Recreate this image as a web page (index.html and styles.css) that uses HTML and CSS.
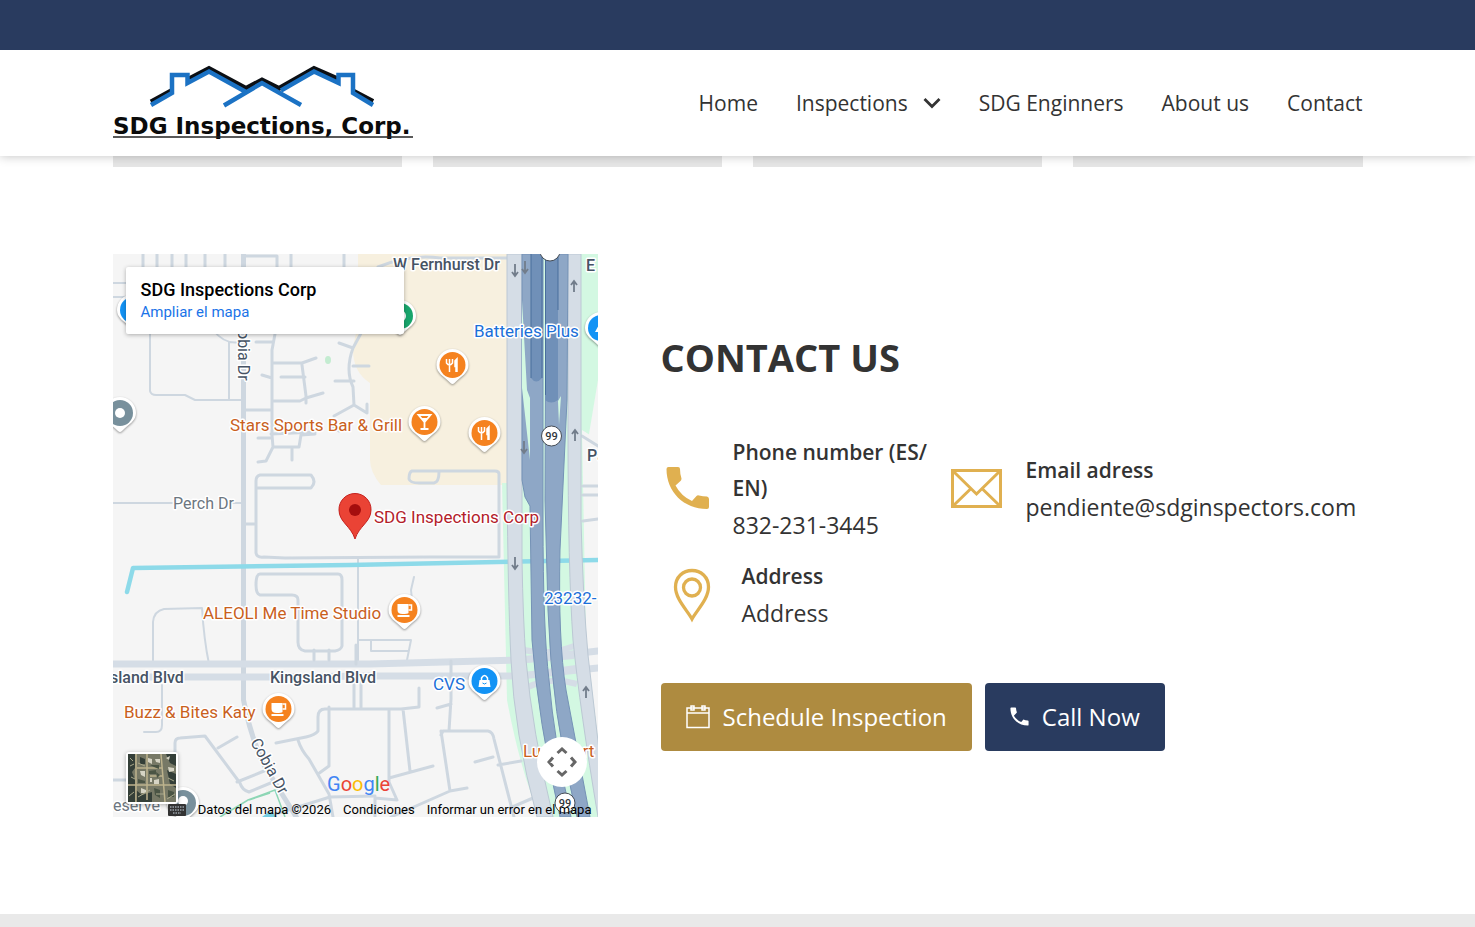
FILE: index.html
```html
<!DOCTYPE html>
<html lang="en">
<head>
<meta charset="utf-8">
<meta name="viewport" content="width=device-width, initial-scale=1">
<title>SDG Inspections, Corp.</title>
<link rel="stylesheet" href="styles.css">
</head>
<body>
<div class="topbar"></div>
<header class="header">
  <div class="container header-inner">
    <a class="logo" href="#" aria-label="SDG Inspections, Corp.">
      <svg class="logo-svg" viewBox="0 0 302 76" width="302" height="76">
        <path d="M38 37 59 25.500M76 14 96 3.500 133 23.500 149 15 166 23.500 201 3.500 225 14M240 26 260 36.500" fill="none" stroke="#0b0f14" stroke-width="5"/>
        <g fill="none" stroke="#1b72c4" stroke-width="4.500">
          <path d="M38 40 59 28V10H74.500V18L96 6.500 133 27M168 25.500 201 6.500 225.500 18V10H240V28L260 40M111 40.500 149 18 188 40"/>
        </g>
        <text class="logo-text" x="0" y="69">SDG Inspections, Corp.</text>
        <path d="M0 72H300" stroke="#222" stroke-width="1.500"/>
      </svg>
    </a>
    <nav class="nav">
      <a href="#">Home</a>
      <a href="#" class="nav-drop">Inspections
        <svg width="18" height="12" viewBox="0 0 18 12"><path d="M1.500 2 9 9.500 16.500 2" fill="none" stroke="#333" stroke-width="2.800"/></svg>
      </a>
      <a href="#">SDG Enginners</a>
      <a href="#">About us</a>
      <a href="#">Contact</a>
    </nav>
  </div>
</header>
<main>
  <div class="container cards"><div></div><div></div><div></div><div></div></div>
  <section class="container contact">
    <div class="map">
      <svg class="map-canvas" viewBox="113 254 485 563" preserveAspectRatio="xMidYMid slice">
        <rect x="113" y="254" width="485" height="563" fill="#f5f5f5"/>
        <path d="M358 254H507V485H381Q370 472 370 460V383Q353 372 353 350Q356 320 372 306L358 290Z" fill="#f7f0df"/>
        <ellipse cx="328" cy="360" rx="3" ry="4" fill="#c4ecd1"/>
        <path d="M502 483 507 700Q520 770 540 817H598V740L586 640 582 430 598 440V254H520V483Z" fill="#d3f8e2"/>
        <path d="M598 380 588 440V600L590 670 598 720Z" fill="#f5f5f5"/>
        <g class="roads">
          <path class="w5" d="M243.500 254V667 700Q250 735 264 765L300 823"/>
          <path class="w3" d="M143 254V267M157 254V267M172 254V267M186 254V267M205 254V267M225 254V267M245 256H277V267M291 254V267M344 254V267M378 267Q410 254 440 258H507"/>
          <path class="w2" d="M113 283H126M113 297H126M150 334V391Q151 395 156 395H185L195 400H241M213 330Q225 345 240 342M229 342V399M113 503H172M231 503H241M162 685V725Q162 732 156 732H144"/>
          <path class="w3" d="M275 334 272 350V426M256 342H272M273 363H302L316 358M302 365 306 396V403M306 398 323 393M273 401H300L306 398M281 377H305M262 375 272 378M246 410H271M272 426V435L273 447H299L301 435 315 434M258 438H272M258 462 266 461 273 447M292 448V460"/>
          <path class="w3" d="M339 343 353 348 366 324M353 348Q345 370 353 387L354 405 367 413V404M353 366H369M354 381H335M354 405 334 416"/>
          <path class="w3" d="M339 431 332 427M271 434 315 432"/>
          <path class="w3" d="M310 475H260Q256 476 256 481V553Q257 558 264 557L285 558 430 557H499V474Q499 471 495 471H412Q409 472 409 479Q410 483 419 483H434Q439 482 439 472M256 488H311Q317 482 311 475M246 524H256"/>
          <path class="w3" d="M260 574H338Q342 574 342 580V646Q341 650 335 651H305Q298 650 298 642V600Q298 595 292 595H260Q256 594 256 585Q256 574 260 574Z"/>
          <path class="w2" d="M358 558V650M414 577 411 590 412 600M153 665V622Q154 611 164 609L202 608Q204 640 209 664M358 640H411L407 660M371 640V651H409M358 650V665"/>
          <path class="w7" d="M113 664H370L520 660 598 651M113 677H280L370 676 520 676 598 668"/>
          <path class="w3" d="M314 650V660M329 650V660M354 678V708M361 678V708M356 645V664M451 661V699L449 731M437 708 451 704M419 688V707L401 709H325Q318 709 318 717V731Q315 735 306 737L276 743M298 740Q301 750 309 759L329 794 333 817M329 707V766L318 774M389 709V782L397 800 375 798 375 817M403 709 410 771M389 778 433 766M441 731 450 791 467 788M450 791 391 817M441 735 443 731H488Q493 732 494 739L514 817M475 762 493 757M498 765 521 761M510 808 533 798"/>
          <path class="w3" d="M175 762V743Q175 738 180 738L205 736 240 783Q242 790 249 792L273 782M237 782 264 771M218 748 237 737M113 780H128M266 817 330 797 375 796"/>
          <path class="w3" d="M582 436 598 446M583 486H598M583 495H598M583 521 598 519"/>
        </g>
        <path d="M220 817 248 800 275 790 285 817M249 800 270 793" fill="none" stroke="#8dd6b5" stroke-width="1.500"/>
        <path d="M262 817 270 811 277 817Z" fill="#76cce0"/>
        <path d="M127 592 133 568 350 565 598 560" fill="none" stroke="#8ddae9" stroke-width="4.500" stroke-linecap="round" stroke-linejoin="round"/>
        <g stroke="#d5dde6" stroke-width="6" fill="none"><path d="M524 650Q548 656 574 646M526 660 574 656M526 675 576 668M528 687Q550 676 577 684"/></g>
        <g fill="#d5dde6" stroke="#bcc8d4">
          <path d="M507 254H522V560Q523 620 526 660Q532 730 553 817H537Q514 732 511 660Q508 600 507 480Z"/>
          <path d="M568 254H581V520Q583 600 588 655L599 750V817H598Q580 710 573 640Q568 570 568 430Z"/>
        </g>
        <g fill="#8ea7c6" stroke="#7592b6" stroke-width="1">
          <path d="M522 254H543V520Q543 630 549 680Q554 740 571 817H560Q538 720 532 640L530 506 525 497 522 480Z"/>
          <path d="M546 254H568L567 400 560 550Q558 640 566 690L590 817H577Q551 710 548 610L545 500Z"/>
        </g>
        <path d="M531 254H542V378Q536 385 531 378ZM545 254H558V400Q551 405 545 400Z" fill="#7090b8"/>
        <path d="M531 254V378M542 254V378M545.500 254V395M558 254V310" stroke="#496e9c" fill="none"/>
        <path d="M522 300 527 390 530 398V460L522 388ZM558 401 561 396 559 425Z" fill="#d3f8e2"/>
        <g fill="none" stroke="#727d8b" stroke-width="1.800">
          <path d="M515 264V275M512 272 515 276 518 272M525 261V272M522 269 525 273 528 269M574 292V282M571 285 574 281 577 285M575 441V431M572 434 575 430 578 434M524 441V452M521 449 524 453 527 449M515 557V568M512 565 515 569 518 565M586 698V688M583 691 586 687 589 691"/>
        </g>
        <g class="shield"><circle cx="550" cy="251" r="10"/><circle cx="551.500" cy="436" r="10"/><circle cx="565" cy="803" r="10"/>
          <text x="551.500" y="440">99</text><text x="565" y="807">99</text></g>
        <g class="label road">
          <text x="393" y="270">W Fernhurst Dr</text><text x="586" y="271">E</text>
          <text x="110" y="683">sland Blvd</text><text x="270" y="683">Kingsland Blvd</text>
          <text class="medium" transform="translate(238 330) rotate(90)">obia Dr</text>
          <text class="medium" transform="translate(250 742) rotate(61)">Cobia Dr</text>
          <text x="587" y="461">Pa</text>
          <text class="grey" x="173" y="509">Perch Dr</text>
          <text class="grey" x="113" y="811">eserve</text>
        </g>
        <g class="label place">
          <text x="230" y="431">Stars Sports Bar &amp; Grill</text><text x="203" y="619">ALEOLI Me Time Studio</text>
          <text x="124" y="718">Buzz &amp; Bites Katy</text><text x="523" y="757">Lupe Tort</text>
          <text class="blue" x="474" y="337">Batteries Plus</text><text class="blue" x="433" y="690">CVS</text>
          <text class="blue" x="544" y="604">23232-</text>
          <text class="red" x="374" y="523">SDG Inspections Corp</text>
        </g>
        <defs>
          <path id="pin" d="M0-16A16 16 0 0 1 16 0C16 8 9 11 2 18Q0 20-2 18C-9 11-16 8-16 0A16 16 0 0 1 0-16Z"/>
          <g id="fork" fill="none" stroke="#fff" stroke-width="1.500"><path d="M-6-6V-2Q-3 2 0-2V-6M-3-6V7"/><path d="M4 7V-5L3-4V1H4" fill="#fff" stroke-width="2.500"/></g>
          <g id="cup"><path d="M-7-6H4V3Q3 4-2 4Q-7 4-7 0ZM-7 5H5V7H-7Z" fill="#fff"/><path d="M4-5H7V0H4" fill="none" stroke="#fff" stroke-width="1.500"/></g>
        </defs>
        <g class="pins">
          <g transform="translate(452.500 365)"><use href="#pin"/><circle r="13" fill="#f5821f"/><use href="#fork"/></g>
          <g transform="translate(484.500 433)"><use href="#pin"/><circle r="13" fill="#f5821f"/><use href="#fork"/></g>
          <g transform="translate(424.500 422)"><use href="#pin"/><circle r="13" fill="#f5821f"/><path d="M-6-7H6L0 0ZM0 0V7M-4 7H4" fill="none" stroke="#fff" stroke-width="1.800"/><path d="M-3-4H3L0 0Z" fill="#fff"/></g>
          <g transform="translate(404.500 610)"><use href="#pin"/><circle r="13" fill="#f5821f"/><use href="#cup"/></g>
          <g transform="translate(278.500 709)"><use href="#pin"/><circle r="13" fill="#f5821f"/><use href="#cup"/></g>
          <g transform="translate(484.500 681)"><use href="#pin"/><circle r="13" fill="#1393f5"/><path d="M-5-1H5L6 6H-6Z" fill="#fff"/><path d="M-3-1V-3Q0-8 3-3V-1" fill="none" stroke="#fff" stroke-width="1.500"/><path d="M-2 2Q0 4 2 2" fill="none" stroke="#1393f5"/></g>
          <g transform="translate(120 413)"><use href="#pin"/><circle r="13" fill="#78909c"/><circle r="5" fill="#fff"/></g>
          <g transform="translate(183 803)"><use href="#pin"/><circle r="13" fill="#78909c"/><circle r="5" cy="-2" fill="#fff"/></g>
          <g transform="translate(133 310)"><use href="#pin"/><circle r="13" fill="#1393f5"/></g>
          <g transform="translate(400 316)"><use href="#pin"/><circle r="13" fill="#18a56c"/><circle r="6" fill="#fff"/></g>
          <g transform="translate(601 328)"><use href="#pin"/><circle r="13" fill="#1393f5"/><path d="M-6 4 0-7V4Z" fill="#fff"/></g>
        </g>
        <path d="M355 493.500A16 16 0 0 1 371 510C371 522 359 526 355 539C351 526 339 522 339 510A16 16 0 0 1 355 493.500Z" fill="#ea4335" stroke="#c5221f"/>
        <circle cx="355" cy="510" r="6" fill="#a50e0e"/>
        <text class="google" x="327" y="791"><tspan fill="#4285f4">G</tspan><tspan fill="#ea4335">o</tspan><tspan fill="#fbbc04">o</tspan><tspan fill="#4285f4">g</tspan><tspan fill="#34a853">l</tspan><tspan fill="#ea4335">e</tspan></text>
      </svg>
      <div class="map-card">
        <strong>SDG Inspections Corp</strong>
        <a href="#">Ampliar el mapa</a>
      </div>
      <button class="satellite" aria-label="Satellite view">
        <svg viewBox="0 0 48 48" width="48" height="48">
          <rect width="48" height="48" fill="#777966"/>
          <path d="M0 0H7V14L4 18 7 26V48H0ZM38 0H48V12L42 9ZM39 16 48 20V34L42 30ZM8 36 14 41 24 38V48H8ZM12 3 17 5V10H12Z" fill="#343f38"/>
          <path d="M8 0V48M0 31H48M19 0V46M33 0 37 48M9 14H34M22 22H35" stroke="#bdb38d" stroke-width="1.500" fill="none"/>
          <path d="M20 4 24 5V10L20 8ZM27 5H32V9L28 8ZM12 17H17V23L13 21ZM26 26 31 25V30H26ZM13 34 18 36V39H13ZM40 13 46 14V17L41 18ZM22 24H24V28H22ZM38 4 42 2 41 6Z" fill="#d6d4c4"/>
          <path d="M22 11H31V15L26 13ZM21 17 28 16V20H21ZM10 25 17 27V29H10ZM26 34 32 36V44L27 41ZM40 36 46 38V43H40ZM28 18 32 21 29 24Z" fill="#4a5444"/>
          <path d="M2 12 6 10M3 23 7 25M1 42 6 38M10 43 22 36M28 40H36M2 4 5 7M40 24 46 27M39 45 47 40M10 9 17 12" stroke="#aaa98b"/>
        </svg>
      </button>
      <button class="pan" aria-label="Map camera controls">
        <svg width="30" height="30" viewBox="0 0 30 30"><path d="M10.500 6 15 2 19.500 6M10.500 24 15 28 19.500 24M6 10.500 2 15 6 19.500M24 10.500 28 15 24 19.500" fill="none" stroke="#666" stroke-width="3"/></svg>
      </button>
      <div class="map-foot">
        <svg width="18" height="12" viewBox="0 0 18 12"><rect width="18" height="12" rx="1" fill="#333"/><path d="M2 3H16M2 6H16M5 9H13" stroke="#9aa3aa" stroke-width="1.500" stroke-dasharray="1.500 1"/></svg>
        <span>Datos del mapa ©2026</span><a href="#">Condiciones</a><a href="#">Informar un error en el mapa</a>
      </div>
    </div>
    <div class="info">
      <h2>CONTACT US</h2>
      <div class="details">
        <div class="item">
          <svg class="icon" width="53" height="53" viewBox="0 0 53 53"><path d="M7.500 5H17Q19 5 19 7Q19 12 20.500 16.500Q20.500 18 19.500 19L14.500 23.500Q20 34 31 39L35.500 34Q36.500 33 38 33.500Q42 34.500 46 34.500Q48 35 48 37V45Q48 47 46 47C23 47 5.500 30 5.500 7Q5.500 5 7.500 5Z" fill="#e0b050"/></svg>
          <div><h3>Phone number (ES/<wbr>EN)</h3><p>832-231-3445</p></div>
        </div>
        <div class="item mail">
          <svg class="icon" width="51" height="39" viewBox="0 0 51 39"><path d="M1.500 1.500H49.500V37.500H1.500ZM2 2 25.500 25 49 2M2 37 19.500 20M49 37 31.500 20" fill="none" stroke="#e0b050" stroke-width="3"/></svg>
          <div><h3>Email adress</h3><p>pendiente@sdginspectors.com</p></div>
        </div>
        <div class="item">
          <svg class="icon" width="62" height="56" viewBox="0 0 62 56"><path d="M31 3.500C40 3.500 47.500 10 47.500 20C47.500 32 36 43 31 52C26 43 14.500 32 14.500 20C14.500 10 22 3.500 31 3.500Z" fill="none" stroke="#e0b050" stroke-width="3.300"/><circle cx="31" cy="20.500" r="8.500" fill="none" stroke="#e0b050" stroke-width="3.300"/></svg>
          <div><h3>Address</h3><p>Address</p></div>
        </div>
      </div>
      <div class="actions">
        <a class="btn gold" href="#">
          <svg width="24" height="24" viewBox="0 0 24 24"><path d="M1 3H23V22.500H1ZM1 8H23M5 1H8V5H5ZM16 1H19V5H16Z" fill="none" stroke="#fff" stroke-width="1.500"/></svg>
          Schedule Inspection</a>
        <a class="btn navy" href="#">
          <svg width="19" height="19" viewBox="5 4 44 44"><path d="M8 5H17Q19 5 19 7Q19 12 21 17L14 24Q20 34 31 39L36 33Q41 35 46 35Q48 35 48 37V45Q48 47 46 47C23 47 6 30 6 7Q6 5 8 5Z" fill="#fff"/></svg>
          Call Now</a>
      </div>
    </div>
  </section>
</main>
<footer class="footer"></footer>
</body>
</html>
```

FILE: styles.css
```css
* { box-sizing: border-box; }
body {
  margin: 0;
  min-height: 100vh;
  display: flex;
  flex-direction: column;
  font-family: "Open Sans", sans-serif;
  color: #333;
  background: #fff;
}
a { color: inherit; text-decoration: none; }
h2, h3, p { margin: 0; }
.container { width: 100%; max-width: 1250px; margin: 0 auto; }
.topbar { position: relative; z-index: 3; height: 50px; background: #293b5f; }
.header {
  position: relative;
  z-index: 2;
  background: #fff;
  box-shadow: 0 0 10px rgba(0, 0, 0, 0.25);
}
.header-inner {
  display: flex;
  align-items: center;
  justify-content: space-between;
  height: 106px;
}
.logo-svg { display: block; overflow: visible; }
.logo-text { font: bold 23px "DejaVu Sans", sans-serif; fill: #0b0b0b; }
.nav { display: flex; gap: 38px; font-size: 21px; line-height: 36px; }
.nav-drop { display: flex; align-items: center; gap: 15px; }
.cards { display: grid; grid-template-columns: repeat(4, 1fr); gap: 31px; }
.cards div { height: 11px; background: #e6e6e6; }
.contact {
  display: grid;
  grid-template-columns: 485fr 702fr;
  gap: 63px;
  align-items: center;
  padding: 87px 0 97px;
}
.map { position: relative; height: 563px; overflow: hidden; font-family: Roboto, sans-serif; }
.map-canvas { display: block; width: 100%; height: 100%; }
.roads path { fill: none; stroke: #ced7e0; stroke-linejoin: round; stroke-linecap: round; }
.roads .w2 { stroke-width: 2px; }
.roads .w3 { stroke-width: 3px; }
.roads .w5 { stroke-width: 5px; }
.roads .w7 { stroke-width: 7px; stroke: #d5dde6; }
.label text { paint-order: stroke; stroke: #fff; stroke-width: 3px; stroke-linejoin: round; }
.road text { font-size: 16px; font-weight: 500; fill: #465364; }
.road .medium { font-weight: 400; }
.road .grey { font-weight: 400; fill: #6c7680; }
.place text { font-size: 17px; fill: #c9601d; }
.place .blue { fill: #1b6fd8; }
.place .red { fill: #b3202a; }
.shield circle { fill: #fff; stroke: #464d55; stroke-width: 1px; }
.shield text { font-size: 11px; font-weight: 500; fill: #30363d; text-anchor: middle; }
.pins use { fill: #fff; }
.pins > g { filter: drop-shadow(0 1px 1px rgba(0, 0, 0, 0.4)); }
.google { font: 400 20px Roboto, sans-serif; }
.map-card {
  position: absolute;
  top: 13px;
  left: 13px;
  width: 278px;
  padding: 12px 15px 11px;
  background: #fff;
  border-radius: 2px;
  box-shadow: 0 1px 4px rgba(0, 0, 0, 0.3);
}
.map-card strong { display: block; font-size: 18px; font-weight: 500; line-height: 22px; color: #000; }
.map-card a { display: block; font-size: 15px; line-height: 22px; color: #1a73e8; }
.satellite {
  position: absolute;
  left: 13px;
  bottom: 13px;
  padding: 0;
  border: 2px solid #fff;
  border-radius: 3px;
  box-shadow: 0 1px 4px rgba(0, 0, 0, 0.3);
}
.satellite svg { display: block; }
.pan {
  position: absolute;
  right: 11px;
  bottom: 30px;
  width: 50px;
  height: 50px;
  display: grid;
  place-items: center;
  padding: 0;
  border: 0;
  border-radius: 50%;
  background: #fff;
}
.map-foot {
  position: absolute;
  right: 6px;
  bottom: 0;
  display: flex;
  align-items: center;
  gap: 12px;
  font-size: 13px;
  line-height: 15px;
  color: #000;
  white-space: nowrap;
}
.info h2 { font-size: 38px; line-height: 72px; font-weight: 700; }
.details {
  display: grid;
  grid-template-columns: 270fr 412fr;
  gap: 14px 20px;
  margin-top: 41px;
}
.item { display: flex; align-items: center; gap: 19px; }
.item.mail { gap: 24px; }
.icon { flex: none; }
.item h3 { font-size: 21px; font-weight: 600; line-height: 36px; }
.item p { font-size: 23px; line-height: 38px; }
.actions { display: flex; gap: 13px; margin-top: 51px; }
.btn {
  display: flex;
  align-items: center;
  gap: 13px;
  padding: 16px 25px;
  border-radius: 4px;
  font-size: 24px;
  line-height: 36px;
  color: #fff;
}
.gold { background: #ae8b40; }
.navy { background: #293b5f; }
.footer { flex: 1; min-height: 13px; background: #e9e9e9; }
```
